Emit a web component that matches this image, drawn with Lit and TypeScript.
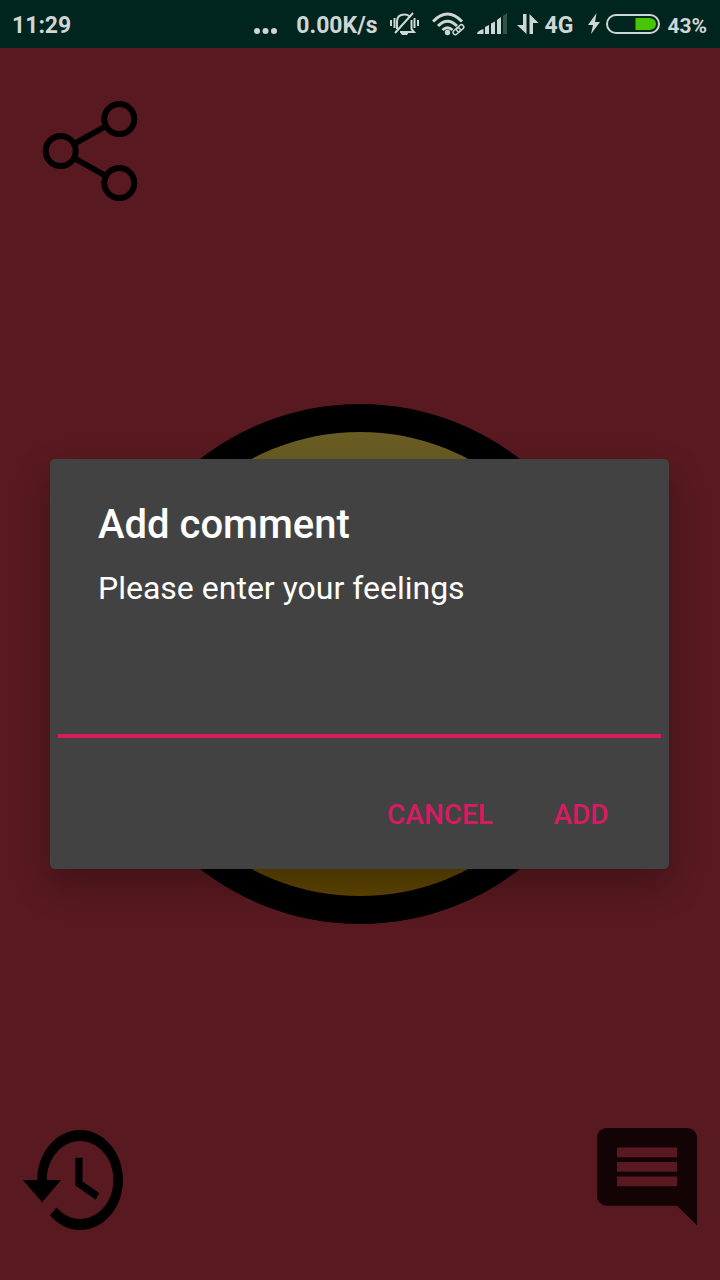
import { LitElement, html, css } from "lit";
import { customElement, state } from "lit/decorators.js";

@customElement("status-bar")
class StatusBar extends LitElement {
  static styles = css`
    :host {
      display: flex;
      align-items: center;
      box-sizing: border-box;
      height: 48px;
      padding: 0 13px 0 12px;
      background: #00241e;
      color: #d0d6d5;
      font: 700 23px/28px Roboto, sans-serif;
    }
    span {
      padding-top: 4px;
    }
    .time {
      flex: 1;
    }
    .items {
      display: flex;
      align-items: center;
    }
    svg {
      display: block;
      fill: currentColor;
    }
    .line {
      fill: none;
      stroke: currentColor;
    }
    .dots {
      margin-right: 19px;
    }
    .bell {
      margin-left: 12px;
    }
    .wifi {
      margin-left: 13px;
    }
    .signal {
      margin-left: 11px;
    }
    .arrows {
      margin: 0 6px 0 10px;
    }
    .bolt {
      margin-left: 15px;
    }
    .battery {
      margin: 0 7px 0 6px;
    }
    .charge {
      fill: #48c400;
    }
    .faint {
      opacity: 0.25;
    }
    .percent {
      font-size: 21px;
    }
  `;

  render() {
    return html`
      <span class="time">11:29</span>
      <div class="items">
        <svg class="dots" width="24" height="24" viewBox="0 0 24 24">
          <circle cx="4" cy="19" r="3" />
          <circle cx="12.500" cy="19" r="3" />
          <circle cx="21" cy="19" r="3" />
        </svg>
        <span>0.00K/s</span>
        <svg class="bell" width="29" height="24" viewBox="0 0 29 24">
          <g class="line" stroke-width="2">
            <path d="M7 17V9.500q0-7 7.500-7 3 0 4.500 1.500M21.500 8v9l2.500 3H10M23 1 5 21" />
            <path d="M1 8v6M4.500 6v10M24.500 6v10M28 8v6" />
          </g>
          <path d="M10 20h9l-2 3h-5z" />
        </svg>
        <svg class="wifi" width="34" height="24" viewBox="0 0 34 24">
          <g class="line" stroke-width="3">
            <path d="M1 9.500Q15.500-5.500 30 9.500" />
            <path d="M6 14q9.500-9.500 19 0" />
            <path d="M10.500 18q5-4.500 10 0" />
          </g>
          <circle cx="15.500" cy="20.500" r="2.700" />
          <g class="line" stroke-width="1.500">
            <rect x="20.500" y="17" width="8" height="4.500" rx="2.200" transform="rotate(-42 24.500 19)" />
            <rect x="24" y="14" width="8" height="4.500" rx="2.200" transform="rotate(-42 28 16)" />
          </g>
        </svg>
        <svg class="signal" width="30" height="22" viewBox="0 0 30 22">
          <path d="M0 21q0-3 6.500-5v5zM8 14l4-2v9H8zM14 10.500l4-2V21h-4zM20 7l4-3v17h-4z" />
          <path class="faint" d="M26 3l4-3v21h-4z" />
        </svg>
        <svg class="arrows" width="22" height="22" viewBox="0 0 22 22">
          <path d="M6 1h3.500v20L0 12h6zM12.500 21V1l9 9H16v11z" />
        </svg>
        <span>4G</span>
        <svg class="bolt" width="12" height="22" viewBox="0 0 12 22">
          <path d="M8.500 0 0 12h5L3 21l9-12H7z" />
        </svg>
        <svg class="battery" width="54" height="20" viewBox="0 0 54 20">
          <rect class="line" x="1" y="1" width="52" height="18" rx="9" stroke-width="2" />
          <path class="charge" d="M29.500 4H44q6 1 6 6t-6 6H29.500z" />
        </svg>
        <span class="percent">43%</span>
      </div>
    `;
  }
}

@customElement("comment-dialog")
class CommentDialog extends LitElement {
  @state() private comment = "";

  static styles = css`
    :host {
      display: block;
      box-sizing: border-box;
      border-radius: 5px;
      background: #424242;
      color: #fff;
      box-shadow: 0 16px 36px rgba(0, 0, 0, 0.28);
      font-family: Roboto, sans-serif;
    }
    .form {
      display: flex;
      flex-direction: column;
    }
    .title {
      margin: 0;
      padding: 41px 48px 0;
      font-size: 40px;
      font-weight: 500;
      line-height: 50px;
    }
    .message {
      padding: 18px 48px 0;
      font-size: 32px;
      line-height: 40px;
    }
    .field {
      height: 90px;
      margin: 40px 8px 0;
      padding: 0 4px;
      border: 0;
      border-bottom: 4px solid #d81b60;
      border-radius: 0;
      outline: 0;
      box-sizing: border-box;
      background: transparent;
      color: inherit;
      font: 36px/44px Roboto, sans-serif;
    }
    .actions {
      display: flex;
      justify-content: flex-end;
      gap: 8px;
      padding: 29px 24px 6px;
    }
    .action {
      min-width: 128px;
      height: 96px;
      padding: 0 16px;
      border: 0;
      background: none;
      color: #d81b60;
      font: 500 28px/36px Roboto, sans-serif;
    }
  `;

  render() {
    return html`
      <form class="form" role="dialog" aria-labelledby="title" @submit=${(e: Event) => e.preventDefault()}>
        <h1 class="title" id="title">Add comment</h1>
        <label class="message" for="comment">Please enter your feelings</label>
        <input
          class="field"
          id="comment"
          type="text"
          .value=${this.comment}
          @input=${(e: Event) => (this.comment = (e.target as HTMLInputElement).value)}
        />
        <div class="actions">
          <button class="action" type="button">CANCEL</button>
          <button class="action" type="submit">ADD</button>
        </div>
      </form>
    `;
  }
}

@customElement("app-root")
class AppRoot extends LitElement {
  static styles = css`
    :host {
      display: flex;
      flex-direction: column;
      min-height: 100vh;
      background: #591920;
    }
    .screen {
      position: relative;
      flex: 1;
      display: grid;
      grid-template-rows: 1fr auto 1fr;
    }
    .row {
      display: flex;
      justify-content: space-between;
    }
    .top {
      align-items: flex-start;
      padding: 53px 40px 0;
    }
    .bottom {
      align-items: flex-end;
      padding: 0 23px 50px;
    }
    .icon {
      display: block;
      padding: 0;
      border: 0;
      background: none;
      color: #000;
    }
    .soft {
      color: #130304;
    }
    svg {
      display: block;
      fill: currentColor;
    }
    .outline {
      fill: none;
      stroke: currentColor;
      stroke-width: 6;
    }
    .face {
      justify-self: center;
      box-sizing: border-box;
      width: 520px;
      height: 520px;
      border: 28px solid #000;
      border-radius: 50%;
      background: linear-gradient(#695d24, #5f4400);
    }
    .overlay {
      position: absolute;
      inset: 0;
      display: flex;
      align-items: center;
      padding: 0 51px 0 50px;
    }
    .dialog {
      flex: 1;
    }
  `;

  render() {
    return html`
      <status-bar></status-bar>
      <main class="screen">
        <div class="row top">
          <button class="icon" aria-label="Share">
            <svg width="100" height="100" viewBox="0 0 100 100">
              <g class="outline">
                <circle cx="79.300" cy="18" r="15" />
                <circle cx="20.700" cy="50" r="15" />
                <circle cx="79.300" cy="82" r="15" />
                <path d="M34 43 66 25M34 57l32 18" />
              </g>
            </svg>
          </button>
        </div>
        <div class="face"></div>
        <div class="row bottom">
          <button class="icon" aria-label="History">
            <svg width="100" height="100" viewBox="1 3 21 18" preserveAspectRatio="none">
              <path
                d="M13 3c-4.970 0-9 4.030-9 9H1l3.890 3.890.07.14L9 12H6c0-3.870 3.130-7 7-7s7 3.130 7 7-3.130 7-7 7c-1.930 0-3.680-.79-4.940-2.060l-1.420 1.420C8.270 19.990 10.510 21 13 21c4.970 0 9-4.030 9-9s-4.030-9-9-9zm-1 5v5l4.280 2.540.72-1.210-3.500-2.080V8H12z"
              />
            </svg>
          </button>
          <button class="icon soft" aria-label="Comments">
            <svg width="100" height="102" viewBox="2 2 20 21" preserveAspectRatio="none">
              <path
                d="M22 4c0-1.100-.9-2-2-2H4c-1.100 0-2 .9-2 2v12c0 1.100.9 2 2 2h14l4 4V4zM18 14H6v-2h12v2zm0-3H6V9h12v2zm0-3H6V6h12v2z"
              />
            </svg>
          </button>
        </div>
        <div class="overlay">
          <comment-dialog class="dialog"></comment-dialog>
        </div>
      </main>
    `;
  }
}
